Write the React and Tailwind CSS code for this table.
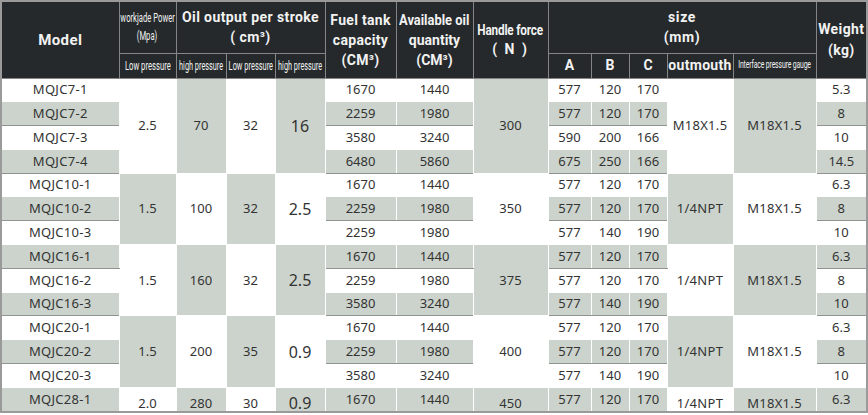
import React from "react";

// single-row data: model, fuel tank, available oil, A, B, C, weight
const rows = [
  ["MQJC7-1", "1670", "1440", "577", "120", "170", "5.3"],
  ["MQJC7-2", "2259", "1980", "577", "120", "170", "8"],
  ["MQJC7-3", "3580", "3240", "590", "200", "166", "10"],
  ["MQJC7-4", "6480", "5860", "675", "250", "166", "14.5"],
  ["MQJC10-1", "1670", "1440", "577", "120", "170", "6.3"],
  ["MQJC10-2", "2259", "1980", "577", "120", "170", "8"],
  ["MQJC10-3", "2259", "1980", "577", "140", "190", "10"],
  ["MQJC16-1", "1670", "1440", "577", "120", "170", "6.3"],
  ["MQJC16-2", "2259", "1980", "577", "120", "170", "8"],
  ["MQJC16-3", "3580", "3240", "577", "140", "190", "10"],
  ["MQJC20-1", "1670", "1440", "577", "120", "170", "6.3"],
  ["MQJC20-2", "2259", "1980", "577", "120", "170", "8"],
  ["MQJC20-3", "3580", "3240", "577", "140", "190", "10"],
  ["MQJC28-1", "1670", "1440", "577", "120", "170", "6.3"],
];

// merged cells per model family
const groups = [
  { start: 0, span: 4, power: "2.5", hp: "70", lp: "32", hp2: "16", handle: "300", out: "M18X1.5", gauge: "M18X1.5" },
  { start: 4, span: 3, power: "1.5", hp: "100", lp: "32", hp2: "2.5", handle: "350", out: "1/4NPT", gauge: "M18X1.5" },
  { start: 7, span: 3, power: "1.5", hp: "160", lp: "32", hp2: "2.5", handle: "375", out: "1/4NPT", gauge: "M18X1.5" },
  { start: 10, span: 3, power: "1.5", hp: "200", lp: "35", hp2: "0.9", handle: "400", out: "1/4NPT", gauge: "M18X1.5" },
  { start: 13, span: 1, power: "2.0", hp: "280", lp: "30", hp2: "0.9", handle: "450", out: "1/4NPT", gauge: "M18X1.5" },
];

const widths = [118, 57, 50, 49, 50, 71, 77, 75, 43, 38, 38, 66, 83, 51];

function Narrow({ children, className = "scale-x-[0.64]" }) {
  return (
    <div className="flex justify-center">
      <span className={`whitespace-nowrap ${className}`}>{children}</span>
    </div>
  );
}

const th = "border border-[#858585] bg-[#25292b] text-[#f2f2f2] p-0 text-center align-middle";
const td = "border border-white p-0 text-center align-middle";
const grayRow = "bg-[#ccd3cc] border-b-[#8f948f]";
const grayBlock = "bg-[#ccd3cc]";

export default function App() {
  return (
    <div className="w-[868px] h-[415px] overflow-hidden bg-white">
      <table className="table-fixed border-collapse border-2 border-[#9a9a9a] w-[868px] font-['Noto_Sans',sans-serif] text-[13px] text-[#333]">
        <colgroup>
          {widths.map((w, i) => (
            <col key={i} style={{ width: w }} />
          ))}
        </colgroup>
        <thead className="font-['Roboto',sans-serif]">
          <tr className="h-[52px]">
            <th rowSpan={2} className={`${th} text-[15px] font-bold tracking-[0.4px]`}>
              Model
            </th>
            <th className={`${th} text-[12px] font-normal leading-[18px]`}>
              <Narrow>workjade Power</Narrow>
              <Narrow>(Mpa)</Narrow>
            </th>
            <th colSpan={3} className={`${th} text-[14px] font-bold leading-[20px] tracking-[0.4px]`}>
              Oil output per stroke
              <br />( cm³)
            </th>
            <th rowSpan={2} className={`${th} text-[14px] font-bold leading-[20px] tracking-[0.3px]`}>
              Fuel tank
              <br />
              capacity
              <br />
              (CM³)
            </th>
            <th rowSpan={2} className={`${th} text-[14px] font-bold leading-[20px]`}>
              <Narrow className="scale-x-[0.92]">Available oil</Narrow>
              quantity
              <br />
              (CM³)
            </th>
            <th rowSpan={2} className={`${th} text-[14px] font-bold leading-[19px]`}>
              <Narrow className="scale-x-[0.84] tracking-[-0.2px]">Handle force</Narrow>
              <span className="tracking-[2px]">( N )</span>
            </th>
            <th colSpan={5} className={`${th} text-[14px] font-bold leading-[20px] tracking-[0.6px]`}>
              size
              <br />
              (mm)
            </th>
            <th rowSpan={2} className={`${th} text-[14px] font-bold leading-[21px] tracking-[0.4px]`}>
              Weight
              <br />
              (kg)
            </th>
          </tr>
          <tr className="h-[25px]">
            <th className={`${th} text-[12px] font-normal`}>
              <Narrow>Low pressure</Narrow>
            </th>
            <th className={`${th} text-[12px] font-normal`}>
              <Narrow className="scale-x-[0.61]">high pressure</Narrow>
            </th>
            <th className={`${th} text-[12px] font-normal`}>
              <Narrow className="scale-x-[0.62]">Low pressure</Narrow>
            </th>
            <th className={`${th} text-[12px] font-normal`}>
              <Narrow className="scale-x-[0.61]">high pressure</Narrow>
            </th>
            <th className={`${th} text-[14px] font-bold`}>A</th>
            <th className={`${th} text-[14px] font-bold`}>B</th>
            <th className={`${th} text-[14px] font-bold`}>C</th>
            <th className={`${th} text-[14px] font-bold tracking-[0.3px]`}>outmouth</th>
            <th className={`${th} text-[11px] font-normal`}>
              <Narrow className="scale-x-[0.62] tracking-[-0.2px]">Interface pressure gauge</Narrow>
            </th>
          </tr>
        </thead>
        <tbody>
          {rows.map((r, i) => {
            const gi = groups.findIndex((g) => g.start === i);
            const g = groups[gi];
            const shade = i % 2 === 1 ? grayRow : "";
            const even = gi % 2 === 0;
            const blk = (on) => (on ? grayBlock : "");
            // last family row: values sit a little lower in the reference
            const last = g && g.span === 1 ? "pt-[7px] leading-[16px]" : "";
            return (
              <tr key={r[0]} className="h-[23.8px]">
                <td className={`${td} ${shade} tracking-[0.3px]`}>{r[0]}</td>
                {g && (
                  <>
                    <td rowSpan={g.span} className={`${td} ${blk(!even)} ${last}`}>{g.power}</td>
                    <td rowSpan={g.span} className={`${td} ${blk(even)} ${last}`}>{g.hp}</td>
                    <td rowSpan={g.span} className={`${td} ${blk(!even)} ${last}`}>{g.lp}</td>
                    <td rowSpan={g.span} className={`${td} ${blk(even)} text-[16px] ${last}`}>{g.hp2}</td>
                  </>
                )}
                <td className={`${td} ${shade}`}>{r[1]}</td>
                <td className={`${td} ${shade}`}>{r[2]}</td>
                {g && (
                  <td rowSpan={g.span} className={`${td} ${blk(even)} ${last}`}>{g.handle}</td>
                )}
                <td className={`${td} ${shade}`}>{r[3]}</td>
                <td className={`${td} ${shade}`}>{r[4]}</td>
                <td className={`${td} ${shade}`}>{r[5]}</td>
                {g && (
                  <>
                    <td rowSpan={g.span} className={`${td} ${blk(!even)} tracking-[0.3px] ${last}`}>{g.out}</td>
                    <td rowSpan={g.span} className={`${td} ${blk(even)} tracking-[0.3px] ${last}`}>{g.gauge}</td>
                  </>
                )}
                <td className={`${td} ${shade}`}>{r[6]}</td>
              </tr>
            );
          })}
        </tbody>
      </table>
    </div>
  );
}
